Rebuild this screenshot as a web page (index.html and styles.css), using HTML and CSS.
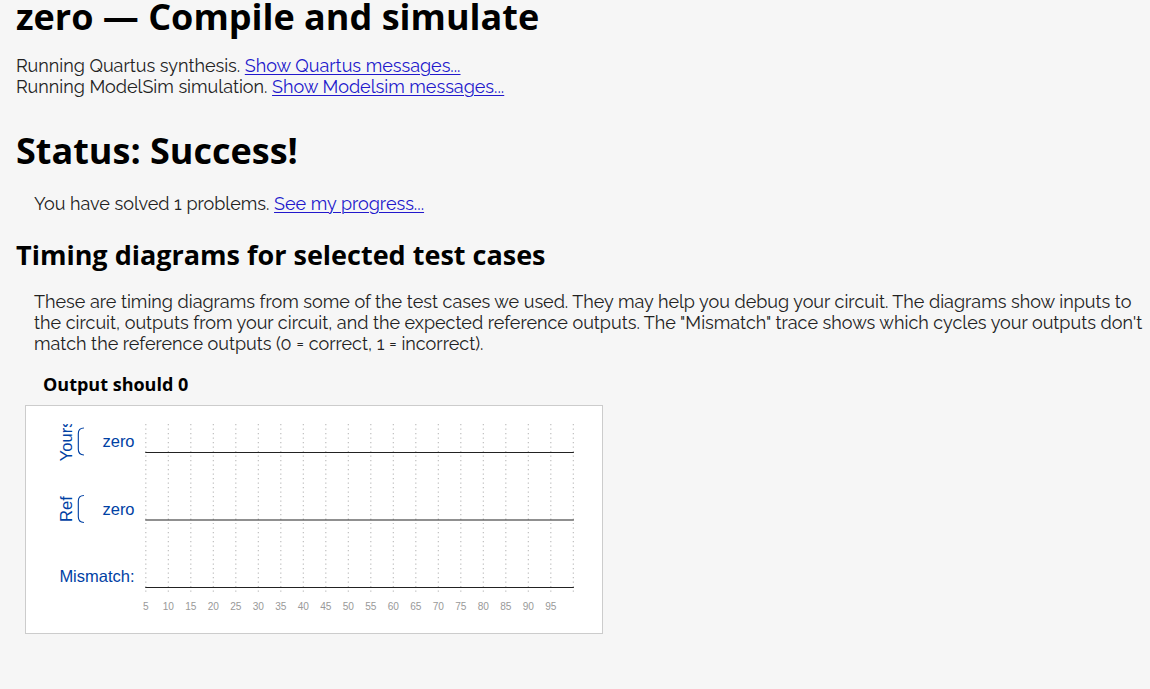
FILE: index.html
```html
<!DOCTYPE html>
<html lang="en">
<head>
<meta charset="utf-8">
<title>zero — Compile and simulate</title>
<link rel="stylesheet" href="styles.css">
</head>
<body>
<main class="page">
  <h1 class="title">zero — Compile and simulate</h1>
  <div class="log">
    <div>Running Quartus synthesis. <a href="#quartus">Show Quartus messages...</a></div>
    <div>Running ModelSim simulation. <a href="#modelsim">Show Modelsim messages...</a></div>
  </div>
  <h1 class="title">Status: Success!</h1>
  <p class="note">You have solved 1 problems. <a href="#progress">See my progress...</a></p>
  <h2 class="subtitle">Timing diagrams for selected test cases</h2>
  <p class="note">These are timing diagrams from some of the test cases we used. They may help you debug your circuit. The diagrams show inputs to the circuit, outputs from your circuit, and the expected reference outputs. The "Mismatch" trace shows which cycles your outputs don't match the reference outputs (0 = correct, 1 = incorrect).</p>
  <h3 class="case">Output should 0</h3>
  <div class="wave">
    <svg class="wave-svg" viewBox="0 0 512 202" role="img" aria-label="Timing diagram">
      <defs><clipPath id="lane"><rect x="0" y="16" width="512" height="186"/></clipPath></defs>
      <path class="grid" d="M106.5 16v150M126.5 16v150M146.5 16v150M166.5 16v150M186.5 16v150M206.5 16v150M226.5 16v150M246.5 16v150M266.5 16v150M286.5 16v150M306.5 16v150M326.5 16v150M346.5 16v150M366.5 16v150M386.5 16v150M406.5 16v150M426.5 16v150M446.5 16v150M466.5 16v150M486.5 16v150"/>
      <path class="trace" d="M106 41.3h381M106 101.3h381M106 161.3h381"/>
      <path class="brace" d="M51.5 19.5q-5 0-5 5v14q0 5 5 5M51.5 79.5q-5 0-5 5v14q0 5 5 5"/>
      <g clip-path="url(#lane)">
        <text class="label" transform="translate(41 49) rotate(-90)">Yours</text>
        <text class="label" transform="translate(41 103) rotate(-90)">Ref</text>
      </g>
      <g class="label" text-anchor="end">
        <text x="96.5" y="36">zero</text>
        <text x="96.5" y="97">zero</text>
        <text x="96.5" y="156">Mismatch:</text>
      </g>
      <g class="tick">
        <text x="106.5" y="181">5</text><text x="126.5" y="181">10</text><text x="146.5" y="181">15</text><text x="166.5" y="181">20</text><text x="186.5" y="181">25</text><text x="206.5" y="181">30</text><text x="226.5" y="181">35</text><text x="246.5" y="181">40</text><text x="266.5" y="181">45</text><text x="286.5" y="181">50</text><text x="306.5" y="181">55</text><text x="326.5" y="181">60</text><text x="346.5" y="181">65</text><text x="366.5" y="181">70</text><text x="386.5" y="181">75</text><text x="406.5" y="181">80</text><text x="426.5" y="181">85</text><text x="446.5" y="181">90</text><text x="466.5" y="181">95</text>
      </g>
    </svg>
  </div>
</main>
</body>
</html>
```
FILE: styles.css
```css
body {
  margin: 0;
  background: #f6f6f6;
  color: #222;
  font: 400 18px/21px Raleway, Lato, sans-serif;
  font-variant-numeric: oldstyle-nums;
}
.page { padding: 0 7px 0 16px; }
.title, .subtitle, .case {
  color: #000;
  font-family: "Open Sans", sans-serif;
  font-variant-numeric: normal;
  font-weight: 700;
}
.title { margin: 0 0 14px; font-size: 36px; line-height: 42px; }
.page > .title:first-child { line-height: 34px; margin-bottom: 21px; }
.log { margin-bottom: 33px; }
.note { margin: 0 0 0 18px; }
.title + .note { margin-top: 21px; }
.subtitle { margin: 22px 0 18px; font-size: 27px; line-height: 37px; }
.case { margin: 18px 0 8px 27px; font-size: 18px; line-height: 25px; }
a { color: #2218cc; text-underline-offset: 2px; text-decoration-thickness: 1px; }
.wave {
  box-sizing: border-box;
  width: 578px;
  max-width: 100%;
  margin-left: 9px;
  border: 1px solid #ccc;
  background: #fff;
}
.wave-svg { display: block; width: 100%; height: auto; }
.grid { fill: none; stroke: #bbb; stroke-width: 1; stroke-dasharray: 1 3; }
.trace { fill: none; stroke: #222; stroke-width: 1; }
.brace { fill: none; stroke: #0041a4; stroke-width: 1; }
.label { font: 400 11pt "Liberation Sans", Arial, sans-serif; fill: #0041a4; font-variant-numeric: normal; }
.tick { font: 400 9px "Liberation Sans", Arial, sans-serif; fill: #999; text-anchor: middle; }
```
